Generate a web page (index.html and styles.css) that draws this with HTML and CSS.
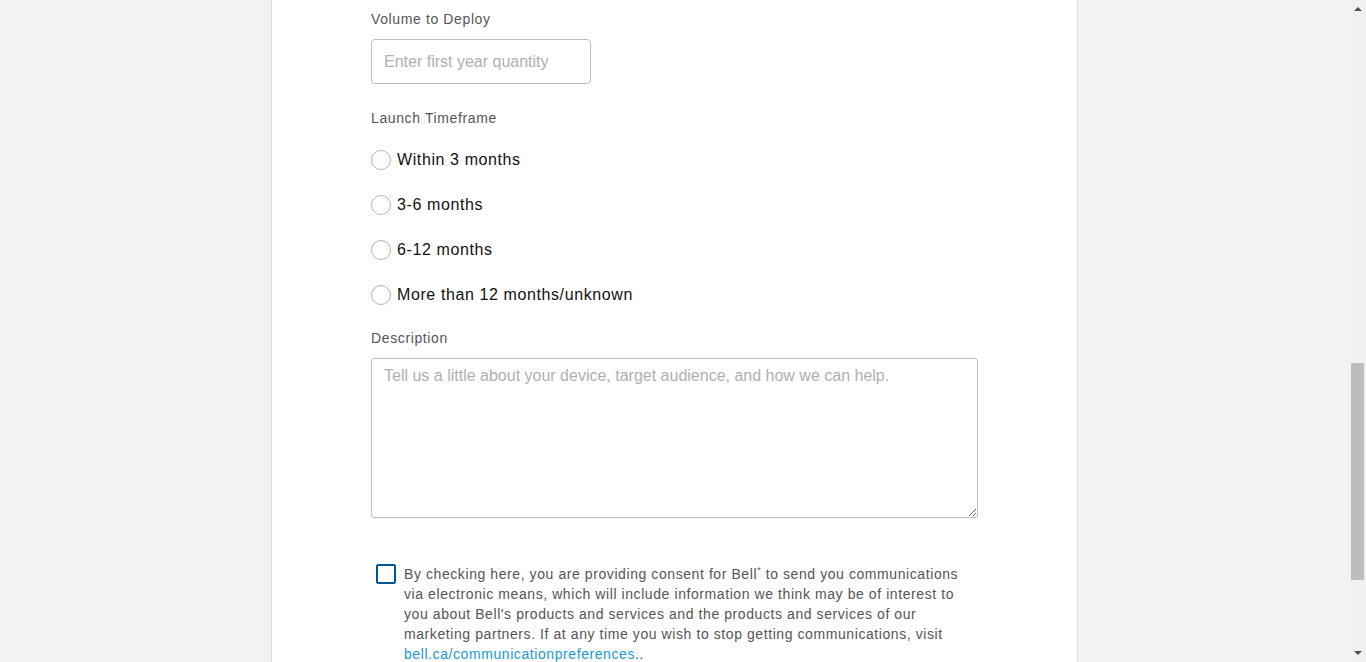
FILE: index.html
```html
<!DOCTYPE html>
<html lang="en">
<head>
<meta charset="utf-8">
<title>Form</title>
<link rel="stylesheet" href="styles.css">
</head>
<body>
<div class="viewport">
  <main class="page">
    <form class="card">
      <div class="field">
        <label class="label" for="vol">Volume to Deploy</label>
        <input class="input" id="vol" type="text" placeholder="Enter first year quantity">
      </div>
      <div class="field field-radios">
        <span class="label">Launch Timeframe</span>
        <div class="radios">
          <label class="radio"><span class="circle"></span><span class="radio-text">Within 3 months</span></label>
          <label class="radio"><span class="circle"></span><span class="radio-text">3-6 months</span></label>
          <label class="radio"><span class="circle"></span><span class="radio-text">6-12 months</span></label>
          <label class="radio"><span class="circle"></span><span class="radio-text">More than 12 months/unknown</span></label>
        </div>
      </div>
      <div class="field field-desc">
        <label class="label" for="desc">Description</label>
        <textarea class="textarea" id="desc" placeholder="Tell us a little about your device, target audience, and how we can help."></textarea>
      </div>
      <div class="consent">
        <span class="checkbox"></span>
        <p class="consent-text">By checking here, you are providing consent for Bell<sup class="star">*</sup> to send you communications<br>via electronic means, which will include information we think may be of interest to<br>you about Bell's products and services and the products and services of our<br>marketing partners. If at any time you wish to stop getting communications, visit<br><a class="link" href="#">bell.ca/communicationpreferences</a>..</p>
      </div>
    </form>
  </main>
  <div class="scrollbar">
    <span class="arrow arrow-up"></span>
    <div class="track"><div class="thumb"></div></div>
    <span class="arrow arrow-down"></span>
  </div>
</div>
</body>
</html>
```

FILE: styles.css
```css
html, body {
  margin: 0;
  padding: 0;
  height: 100%;
  overflow: hidden;
}
body {
  background: #f2f2f2;
  font-family: "Liberation Sans", Arial, sans-serif;
}
.viewport {
  display: flex;
  height: 662px;
}
.page {
  flex: 1;
  display: flex;
  justify-content: center;
  overflow: hidden;
}
.card {
  width: 607px;
  background: #fff;
  border-left: 1px solid #dcdcdc;
  border-right: 1px solid #dcdcdc;
  padding: 9px 99px 0;
  display: flex;
  flex-direction: column;
  box-sizing: content-box;
}
.field {
  display: flex;
  flex-direction: column;
  align-items: flex-start;
  gap: 10px;
  margin-bottom: 24px;
}
.field-radios {
  gap: 22px;
  margin-bottom: 23px;
}
.field-desc {
  margin-bottom: 46px;
}
.label {
  font-size: 14px;
  line-height: 20px;
  color: #555;
  letter-spacing: 0.62px;
}
.input {
  width: 220px;
  height: 45px;
  box-sizing: border-box;
  border: 1px solid #bdbdbd;
  border-radius: 4px;
  padding: 0 12px;
  font-family: "Liberation Sans", Arial, sans-serif;
  font-size: 16px;
  color: #333;
  margin: 0;
}
.input::placeholder, .textarea::placeholder {
  color: #b0b0b0;
  opacity: 1;
}
.radios {
  display: flex;
  flex-direction: column;
  gap: 25px;
}
.radio {
  display: flex;
  align-items: center;
  height: 20px;
  gap: 6px;
}
.circle {
  width: 20px;
  height: 20px;
  box-sizing: border-box;
  border: 1px solid #b5b5b5;
  border-radius: 50%;
  background: #fff;
}
.radio-text {
  font-size: 16px;
  line-height: 20px;
  color: #111;
  letter-spacing: 0.6px;
}
.textarea {
  width: 607px;
  height: 160px;
  box-sizing: border-box;
  border: 1px solid #bdbdbd;
  border-radius: 3px;
  padding: 7px 12px;
  font-family: "Liberation Sans", Arial, sans-serif;
  font-size: 16px;
  line-height: 20px;
  margin: 0;
  resize: both;
}
.consent {
  display: flex;
  align-items: flex-start;
  gap: 8px;
  padding-left: 5px;
}
.checkbox {
  flex: none;
  width: 20px;
  height: 20px;
  box-sizing: border-box;
  border: 2px solid #00549a;
  border-radius: 2px;
  background: #fff;
}
.consent-text {
  margin: 0;
  font-size: 14px;
  line-height: 20px;
  color: #555;
  letter-spacing: 0.58px;
  white-space: nowrap;
}
.star {
  font-size: 9px;
  line-height: 0;
  vertical-align: 6px;
}
.link {
  color: #1a9ad6;
  text-decoration: none;
}
.scrollbar {
  width: 17px;
  flex: none;
  background: #f1f1f1;
  display: flex;
  flex-direction: column;
  align-items: center;
}
.arrow {
  width: 0;
  height: 0;
  border-left: 4px solid transparent;
  border-right: 4px solid transparent;
  margin: 7px 0;
}
.arrow-up {
  border-bottom: 4px solid #505050;
}
.arrow-down {
  border-top: 4px solid #505050;
}
.track {
  flex: 1;
  width: 100%;
  position: relative;
}
.thumb {
  position: absolute;
  left: 2px;
  right: 2px;
  top: 345px;
  height: 217px;
  background: #bdbdbd;
}
```
